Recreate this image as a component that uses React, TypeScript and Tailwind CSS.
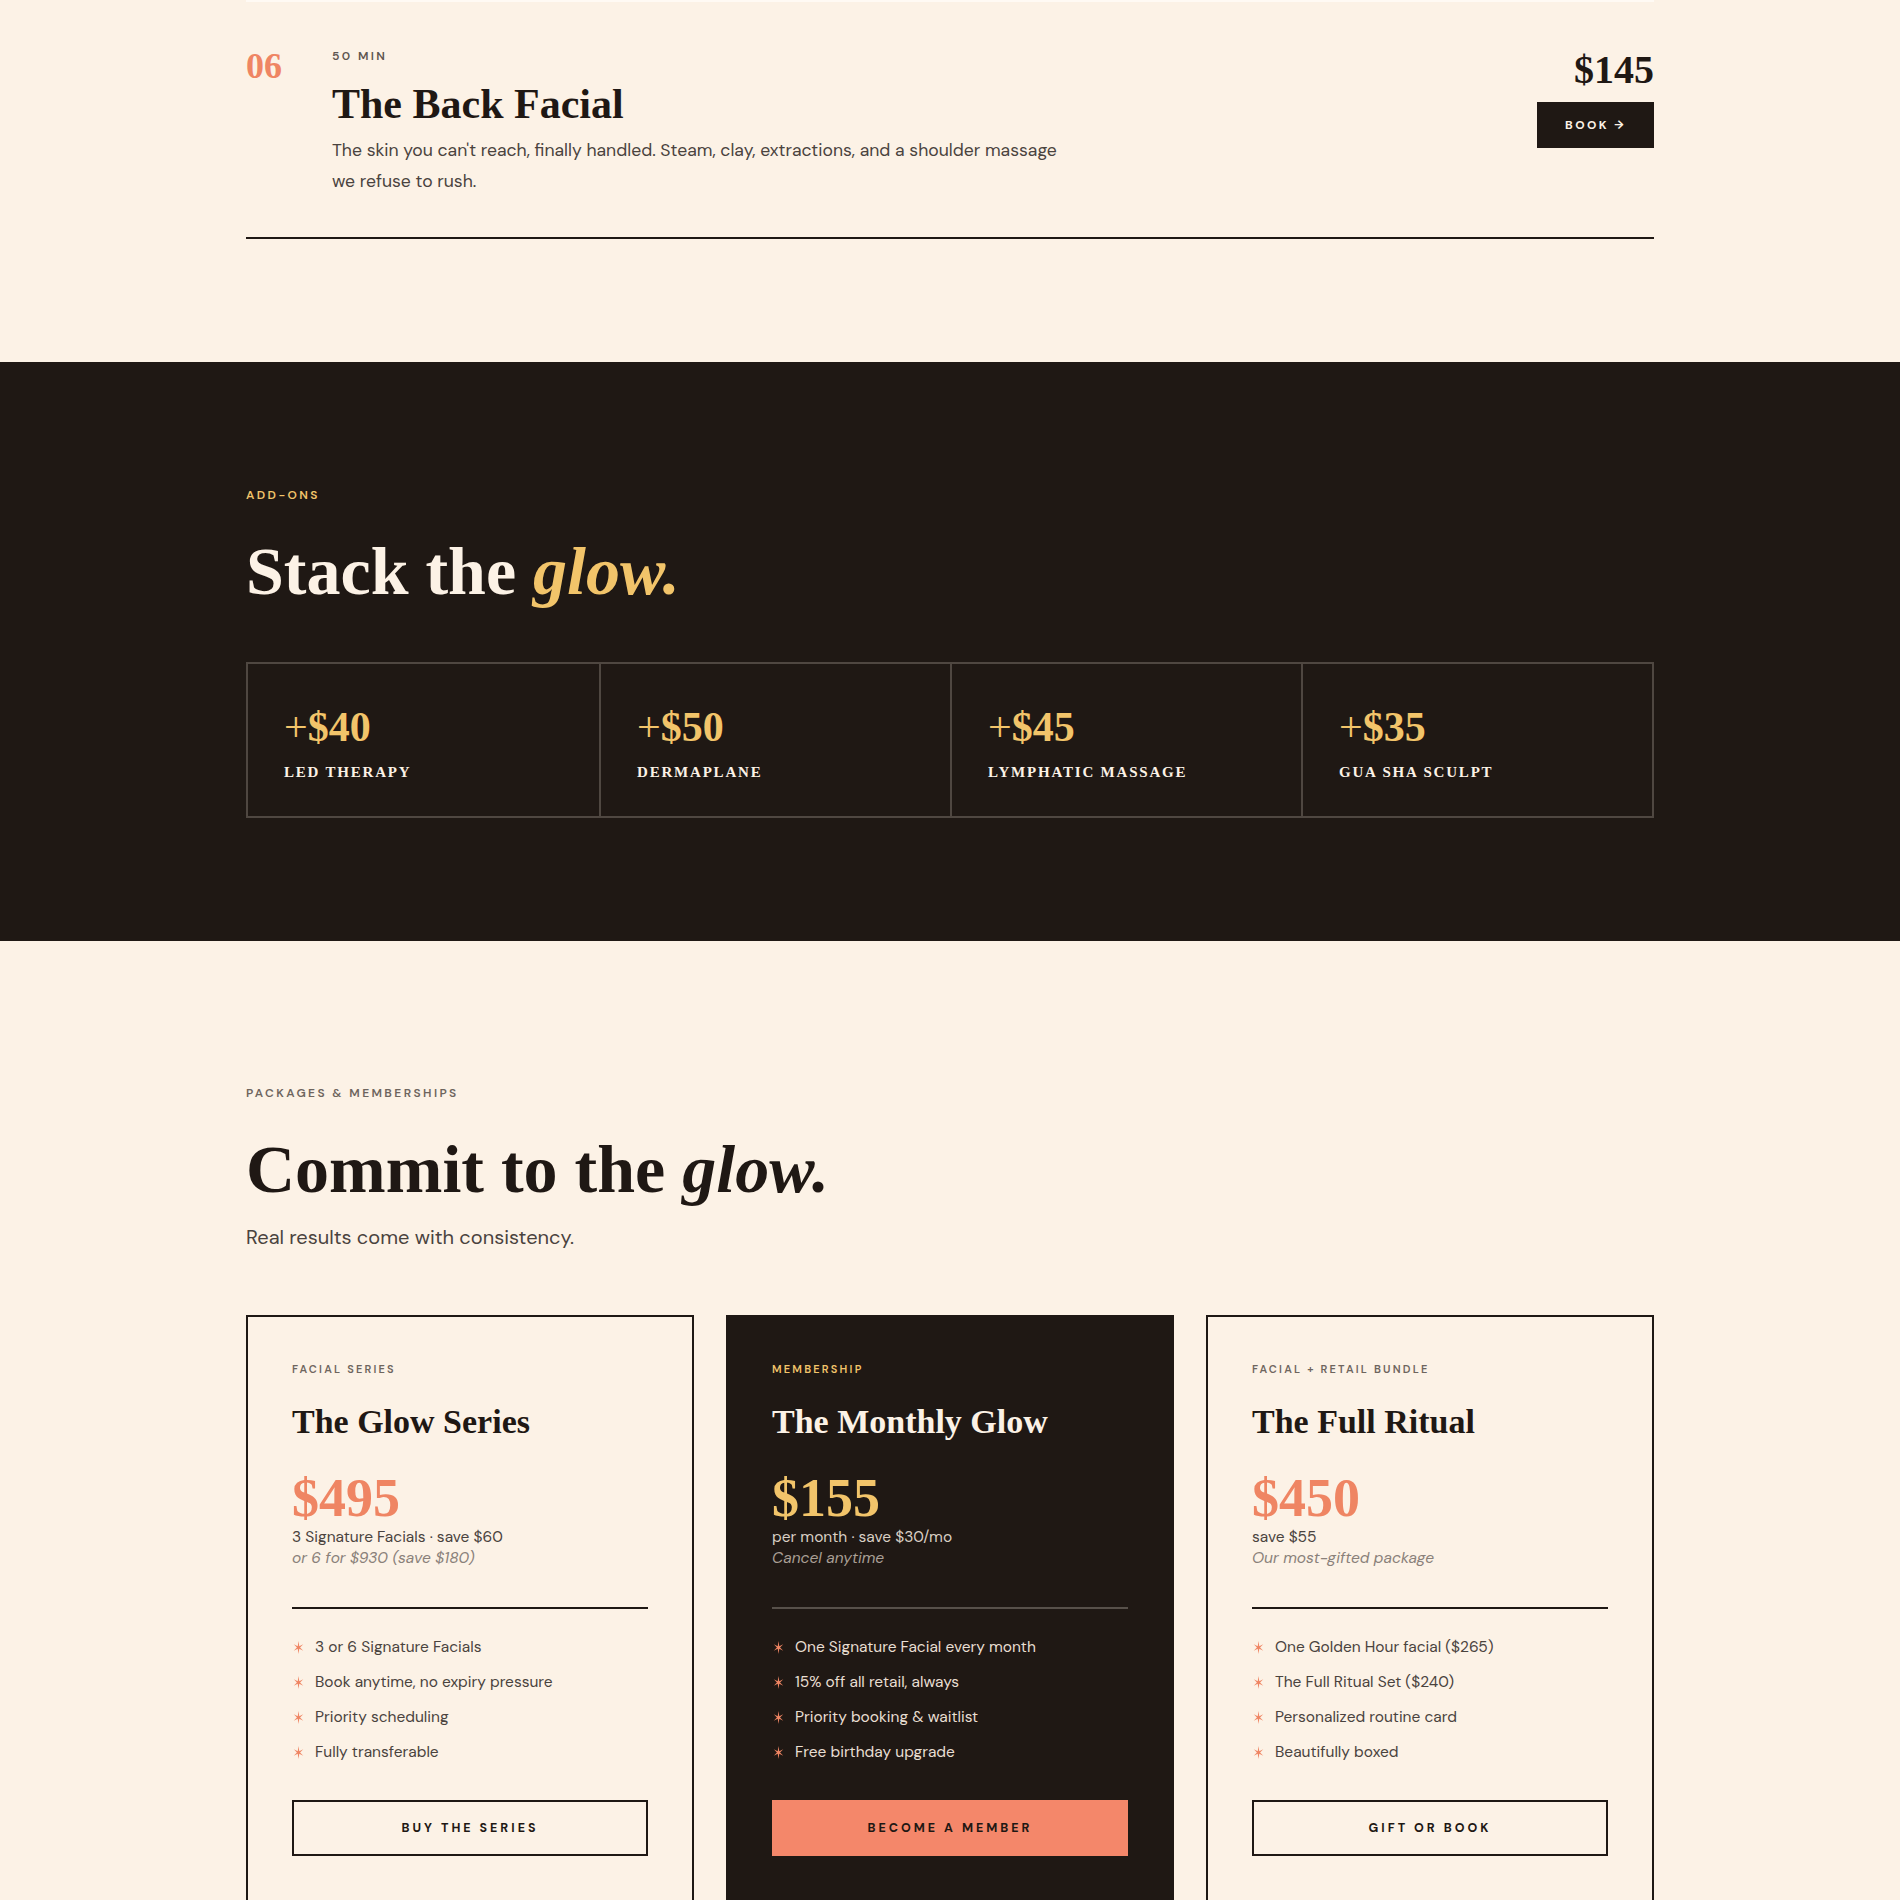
import React from "react";

const serif = "font-['Liberation_Serif','Times_New_Roman',serif]";

const addOns = [
  { price: "40", name: "LED Therapy" },
  { price: "50", name: "Dermaplane" },
  { price: "45", name: "Lymphatic Massage" },
  { price: "35", name: "Gua Sha Sculpt" },
];

const packages = [
  {
    label: "Facial Series",
    title: "The Glow Series",
    price: "$495",
    sub: "3 Signature Facials · save $60",
    note: "or 6 for $930 (save $180)",
    items: ["3 or 6 Signature Facials", "Book anytime, no expiry pressure", "Priority scheduling", "Fully transferable"],
    cta: "Buy the series",
    dark: false,
  },
  {
    label: "Membership",
    title: "The Monthly Glow",
    price: "$155",
    sub: "per month · save $30/mo",
    note: "Cancel anytime",
    items: ["One Signature Facial every month", "15% off all retail, always", "Priority booking & waitlist", "Free birthday upgrade"],
    cta: "Become a member",
    dark: true,
  },
  {
    label: "Facial + Retail Bundle",
    title: "The Full Ritual",
    price: "$450",
    sub: "save $55",
    note: "Our most-gifted package",
    items: ["One Golden Hour facial ($265)", "The Full Ritual Set ($240)", "Personalized routine card", "Beautifully boxed"],
    cta: "Gift or book",
    dark: false,
  },
];

function Star() {
  // six-point asterisk used as list bullet
  return (
    <svg width="13" height="13" viewBox="0 0 10 10" className="shrink-0">
      <polygon
        fill="#ef8563"
        points="5,0 5.6,3.95 8.66,2.5 6.2,5 8.66,7.5 5.6,6.05 5,10 4.4,6.05 1.34,7.5 3.8,5 1.34,2.5 4.4,3.95"
      />
    </svg>
  );
}

export default function App() {
  return (
    <div className="min-h-screen bg-[#fcf2e6] font-['DM_Sans','Lato',sans-serif] text-[#1f1814]">
      {/* Last service row */}
      <div className="mx-auto max-w-[1408px] pb-[123px]">
        <div className="h-[2px] bg-[#fffaf4]" />
        <div className="flex border-b-2 border-[#1f1814] pt-[46px] pb-[41px]">
          <div className={`w-[86px] shrink-0 text-[36px] font-bold leading-none text-[#ef8563] ${serif}`}>06</div>
          <div className="flex-1">
            <p className="text-[12px] font-semibold leading-4 tracking-[0.2em] text-[#5e5650]">50 MIN</p>
            <h3 className={`mt-[19px] text-[42px] font-bold leading-none ${serif}`}>The Back Facial</h3>
            <p className="mt-[10px] max-w-[750px] text-[17.6px] leading-[1.74] text-[#4a433e]">
              The skin you can't reach, finally handled. Steam, clay, extractions, and a shoulder massage we refuse to rush.
            </p>
          </div>
          <div className="flex flex-col items-end">
            <p className={`mt-[2px] text-[40px] font-bold leading-none ${serif}`}>$145</p>
            <button className="mt-3 bg-[#1f1814] px-7 py-[15px] text-[12px] font-bold leading-4 tracking-[0.2em] text-[#fcf2e6]">
              BOOK →
            </button>
          </div>
        </div>
      </div>

      {/* Add-ons */}
      <section className="bg-[#1f1814] pt-[125px] pb-[123px]">
        <div className="mx-auto max-w-[1408px]">
          <p className="text-[12px] font-semibold leading-4 tracking-[0.2em] text-[#f2c46a]">ADD-ONS</p>
          <h2 className={`mt-[34px] text-[68px] font-bold leading-none text-[#fcf2e6] ${serif}`}>
            Stack the <em className="text-[#f2c46a]">glow.</em>
          </h2>
          <div className="mt-[57px] grid grid-cols-4 border-2 border-[#4f4741]">
            {addOns.map((a, i) => (
              <div key={a.name} className={`px-9 pt-[42px] pb-[34px] ${i > 0 ? "border-l-2 border-[#4f4741]" : ""}`}>
                <p className={`text-[42px] font-bold leading-none text-[#f2c46a] ${serif}`}>
                  <span className="font-normal">+</span>${a.price}
                </p>
                <p className={`mt-[14px] text-[15px] font-bold uppercase leading-5 tracking-[0.12em] text-[#fcf2e6] ${serif}`}>
                  {a.name}
                </p>
              </div>
            ))}
          </div>
        </div>
      </section>

      {/* Packages */}
      <section className="pt-[144px]">
        <div className="mx-auto max-w-[1408px]">
          <p className="text-[12px] font-semibold leading-4 tracking-[0.2em] text-[#6e655e]">PACKAGES &amp; MEMBERSHIPS</p>
          <h2 className={`mt-[34px] text-[68px] font-bold leading-none ${serif}`}>
            Commit to the <em>glow.</em>
          </h2>
          <p className="mt-[18px] text-[20px] leading-[1.6] text-[#4a433e]">Real results come with consistency.</p>

          <div className="mt-[62px] grid grid-cols-3 gap-8">
            {packages.map((p) => (
              <div
                key={p.title}
                className={`border-2 border-[#1f1814] p-11 ${p.dark ? "bg-[#1f1814]" : ""}`}
              >
                <p
                  className={`text-[11px] font-semibold uppercase leading-4 tracking-[0.2em] ${
                    p.dark ? "text-[#f2c46a]" : "text-[#6e655e]"
                  }`}
                >
                  {p.label}
                </p>
                <h3
                  className={`mt-[28px] text-[34px] font-bold leading-none ${serif} ${
                    p.dark ? "text-[#fcf2e6]" : "text-[#1f1814]"
                  }`}
                >
                  {p.title}
                </h3>
                <p
                  className={`mt-[32px] text-[54px] font-bold leading-none ${serif} ${
                    p.dark ? "text-[#f2c46a]" : "text-[#ef8563]"
                  }`}
                >
                  {p.price}
                </p>
                <p className={`mt-[2px] text-[15.5px] leading-[21px] ${p.dark ? "text-[#d9cfc4]" : "text-[#4a433e]"}`}>{p.sub}</p>
                <p className={`text-[15.5px] italic leading-[21px] ${p.dark ? "text-[#a99f95]" : "text-[#8a817a]"}`}>{p.note}</p>

                <div className={`mt-[38px] h-[2px] ${p.dark ? "bg-[#57504a]" : "bg-[#1f1814]"}`} />

                <ul className="mt-[26px] flex flex-col gap-[11px]">
                  {p.items.map((it) => (
                    <li key={it} className="flex items-center gap-[10px]">
                      <Star />
                      <span className={`text-[15.5px] leading-6 ${p.dark ? "text-[#e8ded2]" : "text-[#4a433e]"}`}>{it}</span>
                    </li>
                  ))}
                </ul>

                <button
                  className={`mt-9 w-full border-2 py-[18px] text-[12.5px] font-bold uppercase leading-4 tracking-[0.24em] text-[#1f1814] ${
                    p.dark ? "border-[#f4876a] bg-[#f4876a]" : "border-[#1f1814]"
                  }`}
                >
                  {p.cta}
                </button>
              </div>
            ))}
          </div>
        </div>
      </section>
    </div>
  );
}
